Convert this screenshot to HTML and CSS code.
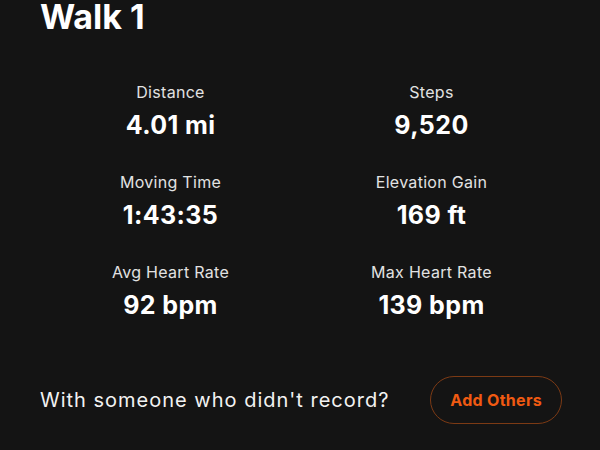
FILE: index.html
```html
<!DOCTYPE html>
<html lang="en">
<head>
    <meta charset="UTF-8">
    <meta name="viewport" content="width=device-width, initial-scale=1.0">
    <title>Walk 1</title>
    <link rel="stylesheet" href="styles.css">
</head>
<body>
    <div class="container">
        <h1 class="title">Walk 1</h1>

        <!-- Activity stats -->
        <div class="stats">
            <div class="stat">
                <div class="stat-label">Distance</div>
                <div class="stat-value">4.01 mi</div>
            </div>
            <div class="stat">
                <div class="stat-label">Steps</div>
                <div class="stat-value">9,520</div>
            </div>
            <div class="stat">
                <div class="stat-label">Moving Time</div>
                <div class="stat-value">1:43:35</div>
            </div>
            <div class="stat">
                <div class="stat-label">Elevation Gain</div>
                <div class="stat-value">169 ft</div>
            </div>
            <div class="stat">
                <div class="stat-label">Avg Heart Rate</div>
                <div class="stat-value">92 bpm</div>
            </div>
            <div class="stat">
                <div class="stat-label">Max Heart Rate</div>
                <div class="stat-value">139 bpm</div>
            </div>
        </div>

        <!-- Add others -->
        <div class="others">
            <span class="others-text">With someone who didn't record?</span>
            <button class="others-button">Add Others</button>
        </div>
    </div>
</body>
</html>
```

FILE: styles.css
```css
body {
    margin: 0;
    padding: 0;
    background-color: #141414;
    color: #fff;
    font-family: Inter, "Noto Sans", sans-serif;
}
.container {
    padding: 0 38px 0 40px;
}
.title {
    margin: 0;
    font-size: 34px;
    line-height: 34px;
    font-weight: 700;
}
.stats {
    display: grid;
    grid-template-columns: 1fr 1fr;
    row-gap: 32px;
    margin-top: 48px;
}
.stat {
    display: flex;
    flex-direction: column;
    align-items: center;
    gap: 8px;
}
.stat-label {
    font-size: 16px;
    line-height: 20px;
    color: #e2e2e2;
    letter-spacing: 0.3px;
}
.stat-value {
    font-size: 25px;
    line-height: 30px;
    font-weight: 700;
    letter-spacing: 0.4px;
}
.others {
    display: flex;
    align-items: center;
    justify-content: space-between;
    margin-top: 56px;
}
.others-text {
    font-size: 20px;
    color: #f2f2f2;
    letter-spacing: 1px;
}
.others-button {
    height: 48px;
    padding: 0 19px;
    background: transparent;
    border: 1.5px solid #7c3a14;
    border-radius: 24px;
    color: #f05a12;
    font-family: inherit;
    font-size: 16px;
    font-weight: 700;
    letter-spacing: 0.3px;
}
```
